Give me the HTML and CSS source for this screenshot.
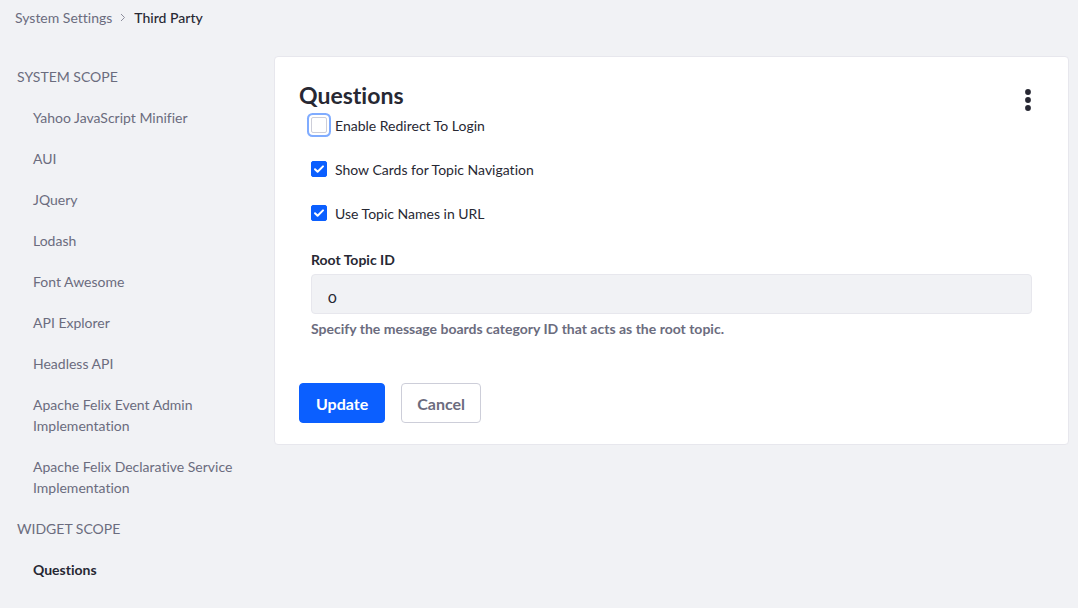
FILE: index.html
```html
<!DOCTYPE html>
<html lang="en">
<head>
<meta charset="utf-8">
<meta name="viewport" content="width=device-width, initial-scale=1">
<title>Questions - System Settings</title>
<link rel="stylesheet" href="styles.css">
</head>
<body>
<nav class="breadcrumb" aria-label="Breadcrumb">
  <a class="breadcrumb-link" href="#">System Settings</a>
  <svg class="breadcrumb-arrow" viewBox="0 0 6 10" aria-hidden="true"><path d="M1 1 4.5 4.5 1 8"/></svg>
  <span class="breadcrumb-current">Third Party</span>
</nav>
<div class="layout">
  <nav class="menu" aria-label="Configuration scopes">
    <h2 class="menu-heading">SYSTEM SCOPE</h2>
    <ul class="menu-list">
      <li><a class="menu-link" href="#">Yahoo JavaScript Minifier</a></li>
      <li><a class="menu-link" href="#">AUI</a></li>
      <li><a class="menu-link" href="#">JQuery</a></li>
      <li><a class="menu-link" href="#">Lodash</a></li>
      <li><a class="menu-link" href="#">Font Awesome</a></li>
      <li><a class="menu-link" href="#">API Explorer</a></li>
      <li><a class="menu-link" href="#">Headless API</a></li>
      <li><a class="menu-link" href="#">Apache Felix Event Admin Implementation</a></li>
      <li><a class="menu-link" href="#">Apache Felix Declarative Service Implementation</a></li>
    </ul>
    <h2 class="menu-heading">WIDGET SCOPE</h2>
    <ul class="menu-list">
      <li><a class="menu-link active" href="#" aria-current="page">Questions</a></li>
    </ul>
  </nav>
  <main class="sheet">
    <header class="sheet-header">
      <h1 class="sheet-title">Questions</h1>
      <button class="actions" type="button" aria-label="Actions">
        <svg class="actions-icon" viewBox="0 0 6 22" aria-hidden="true"><circle cx="3" cy="3" r="2.9"/><circle cx="3" cy="11" r="2.9"/><circle cx="3" cy="19" r="2.9"/></svg>
      </button>
    </header>
    <form>
      <div class="fields">
        <label class="check"><input class="check-input focused" type="checkbox">Enable Redirect To Login</label>
        <label class="check"><input class="check-input" type="checkbox" checked>Show Cards for Topic Navigation</label>
        <label class="check"><input class="check-input" type="checkbox" checked>Use Topic Names in URL</label>
        <div class="field">
          <label class="field-label" for="root">Root Topic ID</label>
          <input class="field-input" id="root" type="text" value="0" aria-describedby="root-help">
          <p class="field-help" id="root-help">Specify the message boards category ID that acts as the root topic.</p>
        </div>
      </div>
      <div class="buttons">
        <button class="btn btn-primary" type="submit">Update</button>
        <button class="btn btn-secondary" type="button">Cancel</button>
      </div>
    </form>
  </main>
</div>
</body>
</html>
```
FILE: styles.css
```css
* { box-sizing: border-box; }

body {
  margin: 0;
  background: #f1f2f5;
  color: #272833;
  font: 14px/21px Lato, "Open Sans", sans-serif;
  font-variant-ligatures: none;
}

a { color: #6b6c7e; text-decoration: none; }

.breadcrumb {
  display: flex;
  align-items: center;
  gap: 8px;
  padding: 7px 15px;
}
.breadcrumb-arrow {
  width: 6px;
  height: 10px;
  fill: none;
  stroke: #8d8e9c;
  stroke-width: 1;
}
.breadcrumb-current { color: #272833; font-weight: 500; }

.layout {
  display: grid;
  grid-template-columns: 240px 1fr;
  gap: 17px;
  align-items: start;
  padding: 21px 9px 0 17px;
}

.menu-heading {
  margin: 0;
  padding: 10px 0;
  color: #6b6c7e;
  font-size: 14px;
  font-weight: 400;
}
.menu-list { margin: 0; padding: 0; list-style: none; }
.menu-link { display: block; padding: 10px 16px; }
.menu-link.active { color: #272833; font-weight: 700; }

.sheet {
  padding: 24px 24px 21px;
  background: #fff;
  border: 1px solid #e7e7ed;
  border-radius: 4px;
}
.sheet-header {
  display: flex;
  justify-content: space-between;
  align-items: start;
  height: 34px;
}
.sheet-title { margin: 0; font-size: 23px; line-height: 28px; font-weight: 700; }

.actions {
  display: flex;
  align-items: center;
  justify-content: center;
  width: 32px;
  height: 38px;
  padding: 0;
  border: 0;
  background: none;
}
.actions-icon { width: 6px; height: 22px; fill: #272833; }

.fields { padding: 0 12px; }
.check {
  display: flex;
  align-items: flex-start;
  gap: 8px;
  margin-bottom: 23px;
}
.check-input {
  appearance: none;
  width: 16px;
  height: 16px;
  margin: 2px 0 0;
  border: 1px solid #cdced9;
  border-radius: 2px;
  background: #fff;
}
.check-input:checked {
  border-color: #0b5fff;
  background: #0b5fff url("data:image/svg+xml,%3Csvg xmlns='http://www.w3.org/2000/svg' viewBox='0 0 14 14'%3E%3Cpath d='M3 7.2 5.6 9.8 11 4.4' fill='none' stroke='white' stroke-width='2' stroke-linecap='round' stroke-linejoin='round'/%3E%3C/svg%3E") center / 14px 14px no-repeat;
}
.check-input.focused { box-shadow: 0 0 0 2px #fff, 0 0 0 4px #80acff; }

.field { padding-top: 2px; }
.field-label { display: block; margin-bottom: 4px; font-weight: 700; }
.field-input {
  display: block;
  width: 100%;
  height: 40px;
  padding: 4px 16px 0;
  border: 1px solid #e7e7ed;
  border-radius: 4px;
  background: #f1f2f5;
  color: #272833;
  font: 16px/24px Lato, "Open Sans", sans-serif;
  font-variant-numeric: oldstyle-nums;
}
.field-help { margin: 4px 0 0; color: #6b6c7e; font-weight: 700; }

.buttons { display: flex; gap: 16px; margin-top: 44px; }
.btn {
  height: 40px;
  padding: 2px 15px 0;
  border: 1px solid;
  border-radius: 4px;
  font: 700 16px/24px Lato, "Open Sans", sans-serif;
}
.btn-primary { padding-right: 16px; padding-left: 16px; border-color: #0b5fff; background: #0b5fff; color: #fff; }
.btn-secondary { border-color: #cdced9; background: #fff; color: #6b6c7e; }
```
